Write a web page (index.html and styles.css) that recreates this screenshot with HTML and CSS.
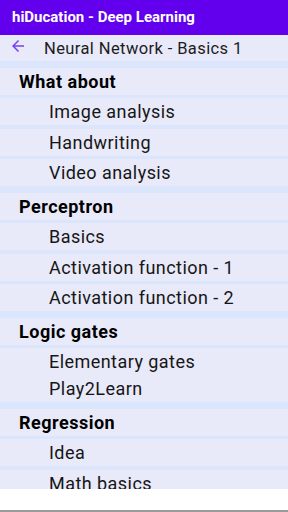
FILE: index.html
```html
<!DOCTYPE html>
<html>

<head>
    <meta charset="UTF-8">
    <title>hiDucation - Deep Learning</title>
    <link rel="stylesheet" href="styles.css">
</head>

<body>
    <div class="appbar">hiDucation - Deep Learning</div>
    <div class="subbar">
        <svg class="back" width="18" height="18" viewBox="0 0 24 24">
            <path d="M20 11H7.83l5.59-5.59L12 4l-8 8 8 8 1.41-1.41L7.83 13H20v-2z" fill="#7b3ff2"/>
        </svg>
        <span class="subtitle">Neural Network - Basics 1</span>
    </div>
    <div class="list">
        <div class="section">
            <div class="head">What about</div>
            <div class="item">Image analysis</div>
            <div class="item">Handwriting</div>
            <div class="item">Video analysis</div>
        </div>
        <div class="section">
            <div class="head">Perceptron</div>
            <div class="item">Basics</div>
            <div class="item">Activation function - 1</div>
            <div class="item">Activation function - 2</div>
        </div>
        <div class="section">
            <div class="head">Logic gates</div>
            <div class="item">Elementary gates</div>
            <div class="item joined">Play2Learn</div>
        </div>
        <div class="section">
            <div class="head">Regression</div>
            <div class="item">Idea</div>
            <div class="item">Math basics</div>
        </div>
    </div>
    <div class="bottom"></div>
</body>

</html>
```

FILE: styles.css
```css
*{
    box-sizing: border-box;
}
body{
    margin: 0;
    width: 288px;
    height: 512px;
    overflow: hidden;
    font-family: Roboto, 'Liberation Sans', sans-serif;
    background: white;
}
.appbar{
    height: 35px;
    padding-left: 12px;
    background: #6200ee;
    color: white;
    font-size: 15px;
    font-weight: bold;
    line-height: 35px;
}
.subbar{
    height: 26px;
    display: flex;
    align-items: center;
    background: #e8e9f9;
}
.back{
    margin-left: 9px;
    margin-top: -5px;
}
.subtitle{
    margin-left: 17px;
    color: #1c1c1c;
    font-size: 16.5px;
    letter-spacing: 0.4px;
}
.list{
    height: 428px;
    overflow: hidden;
    background: #dbe5fb;
}
.section{
    padding-top: 6.5px;
}
.head, .item{
    height: 27px;
    display: flex;
    align-items: center;
    background: #e8e9f9;
    color: #161616;
}
.head{
    padding-left: 19px;
    font-size: 18px;
    font-weight: bold;
    letter-spacing: 0.5px;
    color: #000;
}
.item{
    margin-top: 3.5px;
    padding-left: 49px;
    font-size: 18px;
    letter-spacing: 0.45px;
}
.item.joined{
    margin-top: 0;
}
.bottom{
    height: 23px;
    border-bottom: 2px solid #9a9a9a;
    background: white;
}
```
